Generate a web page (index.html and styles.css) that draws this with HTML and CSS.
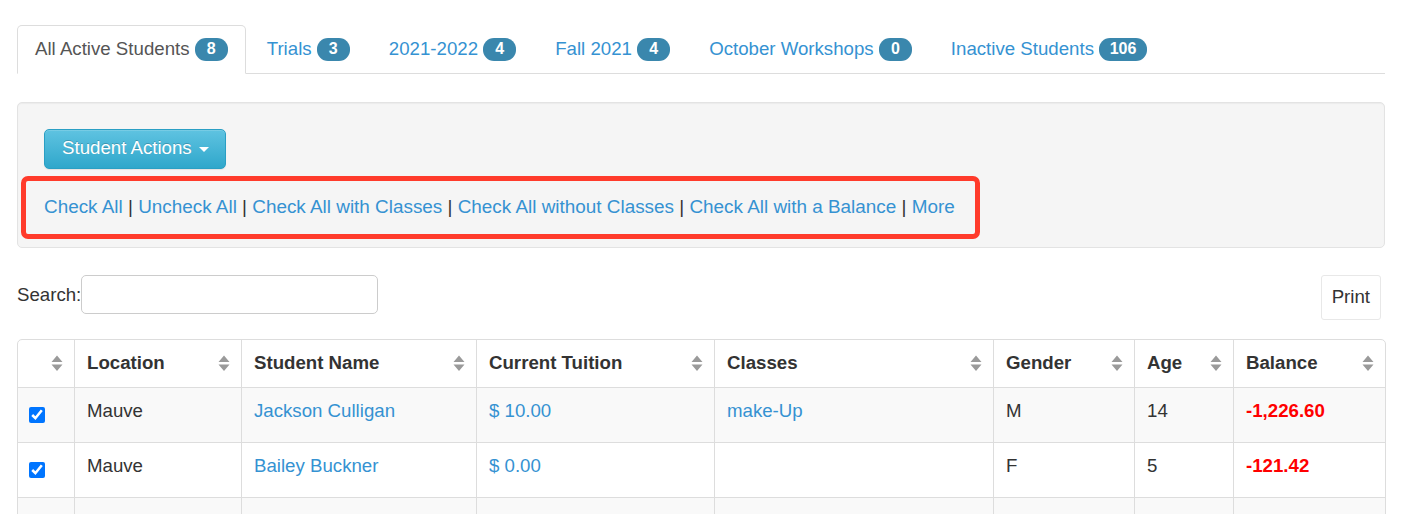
FILE: index.html
```html
<!DOCTYPE html>
<html>
<head>
<meta charset="utf-8">
<title>Students</title>
<link rel="stylesheet" href="styles.css">
</head>
<body>
<div class="page">
  <ul class="tabs">
    <li class="tab active"><a>All Active Students <span class="badge">8</span></a></li>
    <li class="tab"><a>Trials <span class="badge">3</span></a></li>
    <li class="tab"><a>2021-2022 <span class="badge">4</span></a></li>
    <li class="tab"><a>Fall 2021 <span class="badge">4</span></a></li>
    <li class="tab"><a>October Workshops <span class="badge">0</span></a></li>
    <li class="tab"><a>Inactive Students <span class="badge">106</span></a></li>
  </ul>

  <div class="well">
    <button class="btn-info">Student Actions <span class="caret"></span></button>
    <div class="check-links">
      <a>Check All</a> | <a>Uncheck All</a> | <a>Check All with Classes</a> | <a>Check All without Classes</a> | <a>Check All with a Balance</a> | <a>More</a>
    </div>
  </div>

  <div class="toolbar">
    <label class="search">Search:<input class="search-input" type="text"></label>
    <button class="btn-print">Print</button>
  </div>

  <table class="grid">
    <colgroup>
      <col class="c-chk"><col class="c-loc"><col class="c-name"><col class="c-tuition"><col class="c-classes"><col class="c-gender"><col class="c-age"><col class="c-bal">
    </colgroup>
    <thead>
      <tr>
        <th><div class="th-in"><span></span><svg class="sort" viewBox="0 0 12 16"><path d="M0.5 7 L6 0.5 L11.5 7 Z M0.5 9.5 L6 16 L11.5 9.5 Z"/></svg></div></th>
        <th><div class="th-in"><span>Location</span><svg class="sort" viewBox="0 0 12 16"><path d="M0.5 7 L6 0.5 L11.5 7 Z M0.5 9.5 L6 16 L11.5 9.5 Z"/></svg></div></th>
        <th><div class="th-in"><span>Student Name</span><svg class="sort" viewBox="0 0 12 16"><path d="M0.5 7 L6 0.5 L11.5 7 Z M0.5 9.5 L6 16 L11.5 9.5 Z"/></svg></div></th>
        <th><div class="th-in"><span>Current Tuition</span><svg class="sort" viewBox="0 0 12 16"><path d="M0.5 7 L6 0.5 L11.5 7 Z M0.5 9.5 L6 16 L11.5 9.5 Z"/></svg></div></th>
        <th><div class="th-in"><span>Classes</span><svg class="sort" viewBox="0 0 12 16"><path d="M0.5 7 L6 0.5 L11.5 7 Z M0.5 9.5 L6 16 L11.5 9.5 Z"/></svg></div></th>
        <th><div class="th-in"><span>Gender</span><svg class="sort" viewBox="0 0 12 16"><path d="M0.5 7 L6 0.5 L11.5 7 Z M0.5 9.5 L6 16 L11.5 9.5 Z"/></svg></div></th>
        <th><div class="th-in"><span>Age</span><svg class="sort" viewBox="0 0 12 16"><path d="M0.5 7 L6 0.5 L11.5 7 Z M0.5 9.5 L6 16 L11.5 9.5 Z"/></svg></div></th>
        <th><div class="th-in"><span>Balance</span><svg class="sort" viewBox="0 0 12 16"><path d="M0.5 7 L6 0.5 L11.5 7 Z M0.5 9.5 L6 16 L11.5 9.5 Z"/></svg></div></th>
      </tr>
    </thead>
    <tbody>
      <tr class="odd">
        <td><input class="chk" type="checkbox" checked></td>
        <td>Mauve</td>
        <td><a>Jackson Culligan</a></td>
        <td><a>$ 10.00</a></td>
        <td><a>make-Up</a></td>
        <td>M</td>
        <td>14</td>
        <td class="neg">-1,226.60</td>
      </tr>
      <tr>
        <td><input class="chk" type="checkbox" checked></td>
        <td>Mauve</td>
        <td><a>Bailey Buckner</a></td>
        <td><a>$ 0.00</a></td>
        <td></td>
        <td>F</td>
        <td>5</td>
        <td class="neg">-121.42</td>
      </tr>
      <tr class="odd">
        <td><div class="cell-empty"></div></td>
        <td></td>
        <td></td>
        <td></td>
        <td></td>
        <td></td>
        <td></td>
        <td></td>
      </tr>
    </tbody>
  </table>
</div>
</body>
</html>
```

FILE: styles.css
```css
html, body {
  margin: 0;
  padding: 0;
  overflow: hidden;
  background: #fff;
}
body {
  font-family: "Liberation Sans", Arial, sans-serif;
  font-size: 18.67px;
  line-height: 26.67px;
  color: #333;
}
a {
  color: #3592d2;
  text-decoration: none;
  cursor: pointer;
}
.page {
  padding: 25px 25px 0 17px;
}

/* tabs */
.tabs {
  display: flex;
  list-style: none;
  margin: 0;
  padding: 0;
  border-bottom: 1px solid #ddd;
}
.tab {
  margin-bottom: -1px;
  margin-right: 3px;
}
.tab a {
  display: block;
  padding: 10px 17px 10px 17px;
  border: 1px solid transparent;
  border-radius: 5px 5px 0 0;
}
.tab.active a {
  color: #555;
  background: #fff;
  border-color: #ddd #ddd transparent;
}
.badge {
  display: inline-block;
  min-width: 12px;
  padding: 3.5px 10.5px;
  font-size: 16px;
  line-height: 16px;
  font-weight: bold;
  color: #fff;
  text-align: center;
  vertical-align: 1px;
  background: #3a87ad;
  border-radius: 11px;
}

/* well */
.well {
  margin-top: 28px;
  padding: 26px 26px 7.5px 3px;
  background: #f5f5f5;
  border: 1px solid #e3e3e3;
  border-radius: 5px;
  box-shadow: inset 0 1px 1px rgba(0,0,0,0.04);
}
.btn-info {
  display: block;
  margin-left: 23px;
  padding: 5.67px 16px 5.67px 17px;
  font: inherit;
  line-height: 26.67px;
  color: #fff;
  text-shadow: 0 -1px 0 rgba(0,0,0,0.2);
  background: linear-gradient(to bottom, #5fc3e1 0%, #2fa7cb 100%);
  border: 1px solid #2a9fc4;
  border-radius: 5px;
  box-shadow: inset 0 1px 0 rgba(255,255,255,0.15), 0 1px 1px rgba(0,0,0,0.075);
}
.caret {
  display: inline-block;
  width: 0;
  height: 0;
  margin-left: 2px;
  vertical-align: middle;
  border-top: 5px solid #fff;
  border-left: 5px solid transparent;
  border-right: 5px solid transparent;
}
.check-links {
  width: fit-content;
  margin-top: 7px;
  padding: 13.5px 20px 13.5px 18px;
  font-size: 18.9px;
  border: 5px solid #ff3b2b;
  border-radius: 7px;
  white-space: nowrap;
}

/* toolbar */
.toolbar {
  display: flex;
  justify-content: space-between;
  align-items: flex-start;
  margin-top: 27px;
}
.search {
  display: flex;
  align-items: center;
  line-height: 39px;
}
.search-input {
  width: 297px;
  height: 39px;
  box-sizing: border-box;
  margin: 0;
  padding: 4px 8px;
  font: inherit;
  border: 1px solid #ccc;
  border-radius: 5px;
}
.btn-print {
  margin-right: 4px;
  padding: 8px 10px;
  font: inherit;
  line-height: 26.67px;
  color: #333;
  background: #fff;
  border: 1px solid #e8e8e8;
  border-radius: 3px;
}

/* table */
.grid {
  width: 1368px;
  margin-top: 19px;
  table-layout: fixed;
  border-collapse: separate;
  border-spacing: 0;
  border: 1px solid #ddd;
  border-radius: 5px;
}
.c-chk { width: 56px; }
.c-loc { width: 167px; }
.c-name { width: 235px; }
.c-tuition { width: 238px; }
.c-classes { width: 279px; }
.c-gender { width: 141px; }
.c-age { width: 99px; }
.c-bal { width: 152px; }
.grid th, .grid td {
  text-align: left;
  vertical-align: top;
  border-left: 1px solid #ddd;
}
.grid th:first-child, .grid td:first-child {
  border-left: 0;
}
.grid th {
  padding: 10.5px 11px 10.5px 12px;
  font-weight: bold;
  color: #333;
}
.th-in {
  display: flex;
  justify-content: space-between;
  align-items: center;
  height: 26.67px;
}
.sort {
  width: 12px;
  height: 16px;
  fill: #9a9a9a;
  flex: none;
}
.grid td {
  padding: 10px 12px;
  border-top: 1px solid #ddd;
}
.grid td:first-child {
  padding-left: 11px;
}
.grid tr.odd td {
  background: #f9f9f9;
}
.chk {
  display: block;
  width: 16px;
  height: 16px;
  margin: 9px 0;
}
.cell-empty {
  height: 34px;
}
.neg {
  color: #ff0000;
  font-weight: bold;
}
```
